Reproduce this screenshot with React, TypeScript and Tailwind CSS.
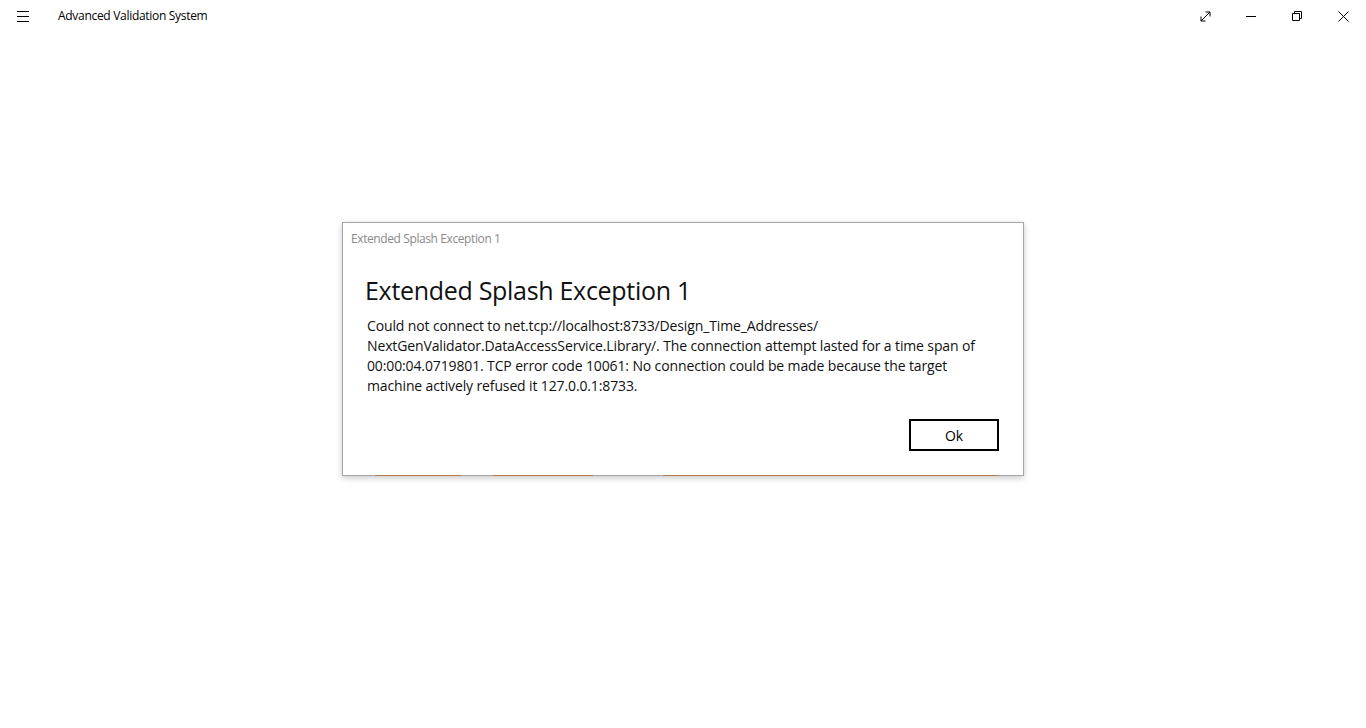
import React from "react";

const font = { fontFamily: '"Open Sans", "Noto Sans", sans-serif' };

function TitleBar() {
  return (
    <div className="flex h-8 items-center bg-white">
      <div className="flex w-[46px] h-8 items-center justify-center">
        <svg width="14" height="12" viewBox="0 0 14 12">
          <path d="M1 1.5H13M1 6.5H13M1 11.5H13" stroke="#000" strokeWidth="1" />
        </svg>
      </div>
      <div className="ml-[12px] text-[12px] tracking-[-0.3px] text-[#000]">Advanced Validation System</div>
      <div className="ml-auto flex">
        <div className="flex w-[46px] h-8 items-center justify-center">
          <svg width="11" height="11" viewBox="0 0 11 11">
            <path d="M1 10L10 1M5.5 1H10V5.5M1 5.5V10H5.5" stroke="#000" strokeWidth="1" fill="none" />
          </svg>
        </div>
        <div className="flex w-[46px] h-8 items-center justify-center">
          <svg width="10" height="10" viewBox="0 0 10 10">
            <path d="M0 5.5H10" stroke="#000" strokeWidth="1" />
          </svg>
        </div>
        <div className="flex w-[46px] h-8 items-center justify-center">
          <svg width="10" height="10" viewBox="0 0 10 10">
            <path d="M0.5 2.5H7.5V9.5H0.5Z M2.5 2.5V0.5H9.5V7.5H7.5" stroke="#000" strokeWidth="1" fill="none" />
          </svg>
        </div>
        <div className="flex w-[46px] h-8 items-center justify-center">
          <svg width="11" height="11" viewBox="0 0 11 11">
            <path d="M0.5 0.5L10.5 10.5M10.5 0.5L0.5 10.5" stroke="#000" strokeWidth="1" />
          </svg>
        </div>
      </div>
    </div>
  );
}

export default function App() {
  return (
    <div className="w-[1366px] h-[728px] bg-white overflow-hidden" style={font}>
      <TitleBar />
      <div className="pt-[190px] flex justify-center">
        <div className="relative w-[682px] h-[254px] border border-[#a6a6a6] bg-white shadow-[0_2px_6px_rgba(0,0,0,0.22)] flex flex-col">
          <div className="pt-[8px] pl-[8px] text-[12px] leading-[16px] tracking-[-0.4px] text-[#8a8a8a]">Extended Splash Exception 1</div>
          <div className="mt-[26px] pl-[22px] text-[25px] leading-[34px] tracking-[-0.3px] text-[#111]">Extended Splash Exception 1</div>
          <div className="mt-[9px] pl-[24px] text-[14px] leading-[20px] tracking-[-0.13px] text-[#111]">
            <div className="whitespace-nowrap">Could not connect to net.tcp://localhost:8733/Design_Time_Addresses/</div>
            <div className="whitespace-nowrap">NextGenValidator.DataAccessService.Library/. The connection attempt lasted for a time span of</div>
            <div className="whitespace-nowrap">00:00:04.0719801. TCP error code 10061: No connection could be made because the target</div>
            <div className="whitespace-nowrap">machine actively refused it 127.0.0.1:8733.</div>
          </div>
          <div className="mt-[23px] flex justify-end pr-[24px]">
            <button className="w-[90px] h-[32px] border-2 border-black bg-white text-[14px] text-black flex items-center justify-center">Ok</button>
          </div>
          <div className="absolute bottom-[-1px] left-[32px] w-[86px] h-[1px] bg-[#b97a4a]" />
          <div className="absolute bottom-[-1px] left-[150px] w-[100px] h-[1px] bg-[#b97a4a]" />
          <div className="absolute bottom-[-1px] left-[320px] w-[335px] h-[1px] bg-[#b97a4a]" />
        </div>
      </div>
    </div>
  );
}
